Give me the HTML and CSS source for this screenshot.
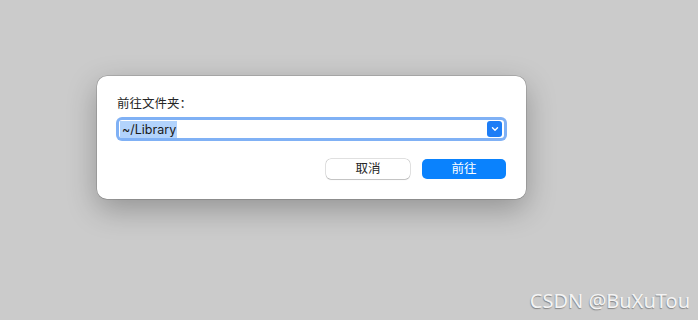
FILE: index.html
```html
<!DOCTYPE html>
<html lang="zh">
<head>
  <meta charset="UTF-8" />
  <title>前往文件夹</title>
  <link rel="stylesheet" href="styles.css">
</head>
<body>
  <div class="dialog">
    <p class="label">前往文件夹：</p>
    <div class="field">
      <span class="value">~/Library</span>
      <span class="dropdown">
        <svg width="8" height="6" viewBox="0 0 8 6"><path d="M1.5 1.8 L4 4.2 L6.5 1.8" fill="none" stroke="#fff" stroke-width="1.4" stroke-linecap="round" stroke-linejoin="round"/></svg>
      </span>
    </div>
    <div class="actions">
      <button class="btn">取消</button>
      <button class="btn btn-primary">前往</button>
    </div>
  </div>
  <div class="watermark">CSDN @BuXuTou</div>
</body>
</html>
```

FILE: styles.css
```css
* {
  margin: 0;
  padding: 0;
  box-sizing: border-box;
}

body {
  width: 698px;
  height: 320px;
  background: #cbcbcb;
  font-family: 'Inter', 'Noto Sans CJK SC', sans-serif;
  color: #262626;
  padding: 76px 0 0 97px;
  position: relative;
  overflow: hidden;
}

/* Dialog */
.dialog {
  width: 429px;
  height: 123px;
  background: #ffffff;
  border-radius: 10px;
  padding: 20px 20px 0 20px;
  box-shadow: 0 0 0 0.5px rgba(0, 0, 0, 0.25), 0 10px 30px rgba(0, 0, 0, 0.28);
}

.label {
  font-size: 12.5px;
  line-height: 16px;
  height: 16px;
}

.field {
  margin-top: 8px;
  margin-left: 2px;
  width: 385px;
  height: 18px;
  border-radius: 3px;
  box-shadow: 0 0 0 3px #80b1f5;
  display: flex;
  align-items: center;
  justify-content: space-between;
  padding: 0 2px 0 1px;
}

.value {
  font-size: 12.5px;
  line-height: 17px;
  background: #b2d3fc;
  color: #1a1a1a;
  padding: 0 1px 0 2px;
}

.dropdown {
  width: 15px;
  height: 16px;
  background: #1d7df6;
  border-radius: 3px;
  display: flex;
  align-items: center;
  justify-content: center;
}

.actions {
  margin-top: 21px;
  display: flex;
  justify-content: flex-end;
  gap: 12px;
}

.btn {
  width: 84px;
  height: 20px;
  font-family: inherit;
  font-size: 12.5px;
  line-height: 18px;
  color: #262626;
  background: #ffffff;
  border: none;
  border-radius: 5px;
  box-shadow: 0 0 0 0.5px rgba(0, 0, 0, 0.22), 0 0.5px 1px rgba(0, 0, 0, 0.15);
}

.btn-primary {
  background: #0a82fd;
  color: #ffffff;
  box-shadow: none;
}

/* Watermark */
.watermark {
  position: absolute;
  right: 8px;
  bottom: 6px;
  font-family: 'Noto Sans', sans-serif;
  font-size: 20px;
  color: #f4f4f4;
  text-shadow: -0.5px 1px 1px rgba(0, 0, 0, 0.35);
}
```
